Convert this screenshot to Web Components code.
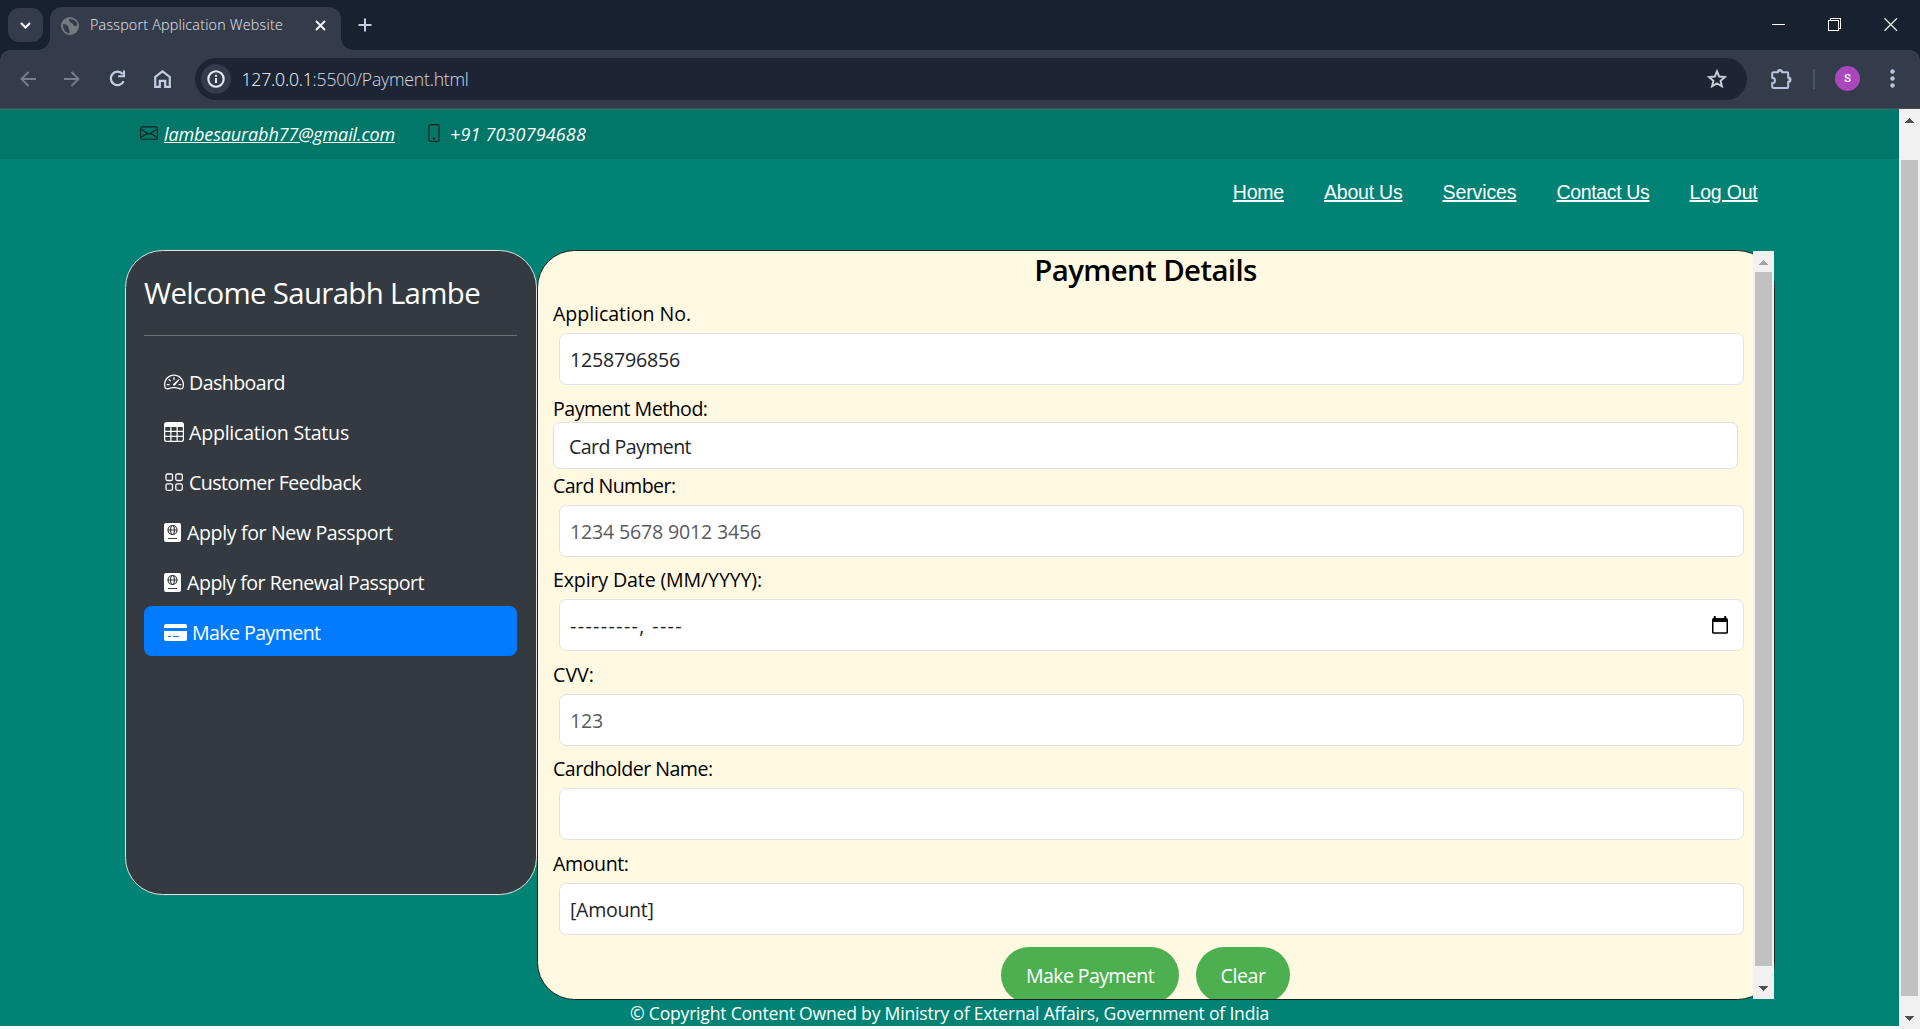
<!DOCTYPE html>
<html lang="en">
<head>
<meta charset="utf-8">
<title>Passport Application Website</title>
<style>
html,body{margin:0;height:100%;overflow:hidden;background:#fff}
body{font-family:"Open Sans","Noto Sans",sans-serif;color:#fff}
</style>
</head>
<body>
<browser-window>
  <tab-strip slot="tabs"></tab-strip>
  <browser-toolbar slot="toolbar"></browser-toolbar>
  <contact-bar></contact-bar>
  <site-nav></site-nav>
  <page-columns>
    <side-menu></side-menu>
    <payment-panel></payment-panel>
  </page-columns>
  <page-footer></page-footer>
  <scroll-bar slot="scroll" start="51" end="33"></scroll-bar>
</browser-window>
<script>
const make = (name, html, setup) => {
  const t = document.createElement('template');
  t.innerHTML = '<style>:host,*{box-sizing:border-box}svg{display:block;flex:none}</style>' + html;
  customElements.define(name, class extends HTMLElement {
    connectedCallback() {
      if (this.shadowRoot) return;
      this.attachShadow({ mode: 'open' }).append(t.content.cloneNode(true));
      if (setup) setup(this, this.shadowRoot);
    }
  });
};

/* A single line of text whose tracking is set so that it fills a given width. */
class FitText extends HTMLElement {
  connectedCallback() {
    if (this.shadowRoot) return;
    const root = this.attachShadow({ mode: 'open' });
    root.innerHTML = '<style>:host{display:inline-block;white-space:nowrap;flex:none}span{display:inline-block;text-decoration:inherit;text-underline-offset:inherit}</style><span><slot></slot></span>';
    requestAnimationFrame(() => this.fit());
    this.fit();
  }
  fit() {
    const s = this.shadowRoot.querySelector('span'), w = +this.getAttribute('w');
    s.style.letterSpacing = '0';
    const n = this.textContent.length, d = (w - s.getBoundingClientRect().width) / n;
    s.style.letterSpacing = d.toFixed(3) + 'px';
  }
}
customElements.define('fit-text', FitText);

make('scroll-bar', `<style>
:host{display:flex;flex-direction:column;width:21px;flex:none;background:#f1f1f1}
.b{flex:none;display:flex;justify-content:center}
.t{flex:1;margin:0 2px;background:#c1c1c1}
</style><div class="b up"><svg width="9" height="5" shape-rendering="crispEdges"><path d="M0 5L4.500 0L9 5Z"/></svg></div><div class="t"></div><div class="b dn"><svg width="9" height="5" shape-rendering="crispEdges"><path d="M0 0L4.500 5L9 0Z"/></svg></div>`,
(h, r) => {
  const up = r.querySelector('.up'), dn = r.querySelector('.dn');
  up.style.height = h.getAttribute('start') + 'px';
  up.style.paddingTop = '9px';
  dn.style.height = h.getAttribute('end') + 'px';
  dn.style.alignItems = 'flex-end';
  dn.style.paddingBottom = '8px';
  up.style.color = h.hasAttribute('top') ? '#a3a3a3' : '#505050';
  up.querySelector('path').setAttribute('fill', 'currentColor');
  dn.querySelector('path').setAttribute('fill', '#505050');
});

make('browser-window', `<style>
:host{display:flex;flex-direction:column;height:100vh;background:#18202f}
.view{flex:1;display:flex;min-height:0;background:#fff}
.page{flex:1;height:917px;background:#008374;overflow:hidden}
::slotted(scroll-bar){height:920px}
</style><slot name="tabs"></slot><slot name="toolbar"></slot><div class="view"><div class="page"><slot></slot></div><slot name="scroll"></slot></div>`);

make('tab-strip', `<style>
:host{display:flex;height:50px;flex:none;background:#18212f;color:#e8ebf2}
.search{width:35px;height:34px;margin:8px 7px 0 8px;border-radius:11px;background:#343b4b;display:flex;align-items:center;justify-content:center}
.tab{position:relative;width:291px;height:43px;margin-top:7px;border-radius:12px 12px 0 0;background:#343b4b;display:flex;align-items:center;padding:0 15px 6px 11px}
.tab:before,.tab:after{content:"";position:absolute;bottom:0;width:12px;height:12px}
.tab:before{left:-12px;background:radial-gradient(circle at 0 0,transparent 11.5px,#343b4b 12px)}
.tab:after{right:-12px;background:radial-gradient(circle at 100% 0,transparent 11.5px,#343b4b 12px)}
fit-text{font-size:14.3px;line-height:20px;margin:-1px 0 0 11px;font-weight:350}
.x{margin-left:auto}
.plus{margin:18px 0 0 17px}
.win{margin:18px 22px 0 auto;display:flex;gap:43px}
</style>
<div class="search"><svg width="11" height="7"><path d="M1 1l4.500 4.500L10 1" fill="none" stroke="#f3f5f9" stroke-width="2.200"/></svg></div>
<div class="tab"><svg width="18" height="18" viewBox="0 0 18 18"><circle cx="9" cy="9" r="9" fill="#757a80"/><path d="M2 7c3 0 5 1 5.500 3.500S9 13 8.500 16.300C4.500 16 1.800 12.500 2 7zM8 2c0 3 1.500 3.800 3 4.200s1.200 2.800 3.200 3.100 1.700-2 2-2.800C15 3.500 11.500 1.600 8 2z" fill="#343b4b"/></svg><fit-text w="193">Passport Application Website</fit-text><svg class="x" width="11" height="11"><path d="M1 1l9 9M10 1l-9 9" stroke="#eef0f5" stroke-width="2"/></svg></div>
<svg class="plus" width="14" height="14"><path d="M7 .5v13M.5 7h13" stroke="#c3cce0" stroke-width="2"/></svg>
<div class="win"><svg width="13" height="13" shape-rendering="crispEdges"><path d="M0 6.500h13" stroke="#fff"/></svg><svg width="13" height="13" shape-rendering="crispEdges"><path d="M.5 2.500h10v10H.5zM2.500 2.500v-2h10v10h-2" fill="none" stroke="#fff"/></svg><svg width="14" height="13"><path d="M.5 .3l12.500 12.500M13 .3L.5 12.800" stroke="#e8eae4" stroke-width="1.300"/></svg></div>`);

make('browser-toolbar', `<style>
:host{display:block;height:59px;flex:none;background:#18212f}
.bar{height:59px;background:#343b4b;border-bottom:1px solid #4c4d52;border-radius:10px 10px 0 0;display:flex;align-items:center;padding:0 25px 1px 20px}
.ic{display:flex;gap:28.400px;align-items:center}
.url{width:1552px;height:42px;margin-left:23.800px;border-radius:21px;background:#1d2535;display:flex;align-items:center;padding:0 20px 0 6px;color:#d5dae4}
.info{width:30px;height:30px;border-radius:50%;background:#343b4b;display:flex;align-items:center;justify-content:center;margin-right:10.500px}
fit-text{font-size:17.600px;line-height:26px;font-weight:350;margin-top:1px}
i{font-style:normal;color:#fff}
.star{margin-left:auto}
.ext{margin-left:23px}
.sep{width:2px;height:20px;background:#4b5467;margin:0 20px 0 21px}
.av{width:25px;height:25px;border-radius:50%;background:#ab47bc;font:500 11.500px/25px Roboto,sans-serif;text-align:center;color:#fff}
.dots{margin-left:auto}
</style><div class="bar"><div class="ic">
<svg width="16" height="16"><path d="M16 8H1.500M8.500 1L1.500 8l7 7" fill="none" stroke="#767d8c" stroke-width="1.900"/></svg>
<svg width="16" height="16"><path d="M0 8h14.500M7.500 1l7 7-7 7" fill="none" stroke="#767d8c" stroke-width="1.900"/></svg>
<svg width="17" height="17"><path d="M14.600 11.200A6.700 6.700 0 1 1 13.600 4" fill="none" stroke="#c3cce0" stroke-width="2.300"/><path d="M16 .5v6.800H9.200V5.200h4.700V.5z" fill="#c3cce0"/></svg>
<svg width="17" height="18"><path d="M1.200 7v9.800h4.600v-6h5.400v6h4.600V7L8.500 1.300z" fill="none" stroke="#c3cce0" stroke-width="2.200"/></svg></div>
<div class="url"><div class="info"><svg width="18" height="18"><circle cx="9" cy="9" r="7.700" fill="none" stroke="#e6e9f0" stroke-width="2.100"/><path d="M9 8v5M9 4.800v2" stroke="#e6e9f0" stroke-width="2"/></svg></div><fit-text w="227">
<i>127.0.0.1</i>:5500/Payment.html</fit-text>
<svg class="star" width="20" height="20" viewBox="0 0 20 20"><path d="M10 2.400l2.200 5.200 5.600.5-4.200 3.700 1.300 5.500L10 14.400l-4.900 2.900 1.300-5.500L2.200 8.100l5.600-.5z" fill="none" stroke="#c9cdd6" stroke-width="2"/></svg></div>
<svg class="ext" width="22" height="22"><path d="M3.500 4.200h4.300a2.200 2.200 0 0 1 4.400 0h5a1 1 0 0 1 1 1v4.300a2.300 2.300 0 0 1 0 4.600v5a1 1 0 0 1-1 1H3.500a1.300 1.300 0 0 1-1.300-1.300v-3.600a2.500 2.500 0 0 0 0-5.500V5.500a1.300 1.300 0 0 1 1.300-1.300z" fill="none" stroke="#b9c5de" stroke-width="2"/><path d="M7.500 3.800a2.300 2.300 0 0 1 4.800 0zM18.500 9.300a2.400 2.400 0 0 1 0 5z" fill="#b9c5de"/></svg>
<div class="sep"></div><div class="av">S</div>
<svg class="dots" width="5" height="19"><circle cx="2.500" cy="2.500" r="2.200" fill="#b9c5de"/><circle cx="2.500" cy="9.500" r="2.200" fill="#b9c5de"/><circle cx="2.500" cy="16.500" r="2.200" fill="#b9c5de"/></svg></div>`);

make('contact-bar', `<style>
:host{display:flex;height:50px;background:#007769;padding-left:140px;font:italic 400 18px/26px "Open Sans",sans-serif}
svg{margin-top:15px;fill:#16201f}
fit-text{margin:11.500px 0 0 6px}
fit-text.m{text-decoration:underline;text-underline-offset:1px}
.ph{margin-left:30px}
fit-text.n{margin-left:7px}
</style><svg width="18" height="18" viewBox="0 0 16 16"><path d="M0 4a2 2 0 0 1 2-2h12a2 2 0 0 1 2 2v8a2 2 0 0 1-2 2H2a2 2 0 0 1-2-2V4Zm2-1a1 1 0 0 0-1 1v.217l7 4.200 7-4.200V4a1 1 0 0 0-1-1H2Zm13 2.383-4.708 2.825L15 11.105V5.383Zm-.034 6.876-5.640-3.471L8 9.583l-1.326-.795-5.640 3.470A1 1 0 0 0 2 13h12a1 1 0 0 0 .966-.741ZM1 11.105l4.708-2.897L1 5.383v5.722Z"/></svg>
<fit-text class="m" w="231">lambesaurabh77@gmail.com</fit-text>
<svg class="ph" width="18" height="18" viewBox="0 0 16 16"><path d="M11 1a1 1 0 0 1 1 1v12a1 1 0 0 1-1 1H5a1 1 0 0 1-1-1V2a1 1 0 0 1 1-1h6zM5 0a2 2 0 0 0-2 2v12a2 2 0 0 0 2 2h6a2 2 0 0 0 2-2V2a2 2 0 0 0-2-2H5z"/><path d="M8 14a1 1 0 1 0 0-2 1 1 0 0 0 0 2z"/></svg>
<fit-text class="n" w="136">+91 7030794688</fit-text>`);

make('site-nav', `<style>
:host{display:flex;height:91px;justify-content:flex-end;gap:40px;padding:21px 141.500px 0 0;font:400 19.500px/24px "Liberation Sans",Arial,sans-serif}
fit-text{text-decoration:underline 1.500px;text-underline-offset:1px;height:24px}
</style><fit-text w="51.200">Home</fit-text><fit-text w="78.500">About Us</fit-text><fit-text w="74">Services</fit-text><fit-text w="93">Contact Us</fit-text><fit-text w="68">Log Out</fit-text>`);

make('page-columns', `<style>:host{display:flex;align-items:flex-start;padding-left:125px}</style><slot></slot>`);

make('menu-item', `<style>
:host{display:flex;height:50px;padding:0 20px;border-radius:7.500px;align-items:flex-start;font-size:19.600px;line-height:30px}
:host([active]){background:#007bff}
slot[name=icon]{display:flex}
.t{margin-top:12px}
::slotted(svg){display:block;flex:none}
</style><slot name="icon"></slot><div class="t"><slot></slot></div>`);

make('side-menu', `<style>
:host{display:flex;flex-direction:column;width:412px;height:645px;flex:none;background:#343a40;border:1px solid #dee2e6;border-radius:37.500px;padding:19px 19px 0 18px}
h2{margin:0;font-weight:370;font-size:29.400px;line-height:47px;height:65px}
hr{margin:0 0 20px;width:100%;border:0;height:1px;background:#6d7175}
svg{display:block;fill:#fff}
</style><h2><fit-text w="336">Welcome Saurabh Lambe</fit-text></h2><hr>
<menu-item><svg slot="icon" style="margin:16px 5px 0 0" width="20" height="20" viewBox="0 0 16 16"><path d="M8 4a.5.5 0 0 1 .5.5V6a.5.5 0 0 1-1 0V4.500A.5.5 0 0 1 8 4zM3.732 5.732a.5.5 0 0 1 .707 0l.915.914a.5.5 0 1 1-.708.708l-.914-.915a.5.5 0 0 1 0-.707zM2 10a.5.5 0 0 1 .5-.5h1.586a.5.5 0 0 1 0 1H2.500A.5.5 0 0 1 2 10zm9.500 0a.5.5 0 0 1 .5-.5h1.500a.5.5 0 0 1 0 1H12a.5.5 0 0 1-.5-.5zm.754-4.246a.389.389 0 0 0-.527-.02L7.547 9.310a.91.91 0 1 0 1.302 1.258l3.434-4.297a.389.389 0 0 0-.029-.518z"/><path fill-rule="evenodd" d="M0 10a8 8 0 1 1 15.547 2.661c-.442 1.253-1.845 1.602-2.932 1.250C11.309 13.488 9.475 13 8 13c-1.474 0-3.310.488-4.615.911-1.087.352-2.490.003-2.932-1.250A7.988 7.988 0 0 1 0 10zm8-7a7 7 0 0 0-6.603 9.329c.203.575.923.876 1.680.630C4.397 12.533 6.358 12 8 12s3.604.532 4.923.960c.757.245 1.477-.056 1.680-.631A7 7 0 0 0 8 3z"/></svg><fit-text w="96">Dashboard</fit-text></menu-item>
<menu-item><svg slot="icon" style="margin:16px 5px 0 0" width="20" height="20" viewBox="0 0 16 16"><path d="M0 2a2 2 0 0 1 2-2h12a2 2 0 0 1 2 2v12a2 2 0 0 1-2 2H2a2 2 0 0 1-2-2V2zm15 2h-4v3h4V4zm0 4h-4v3h4V8zm0 4h-4v3h3a1 1 0 0 0 1-1v-2zm-5 3v-3H6v3h4zm-5 0v-3H1v2a1 1 0 0 0 1 1h3zm-4-4h4V8H1v3zm0-4h4V4H1v3zm5-3v3h4V4H6zm4 4H6v3h4V8z"/></svg><fit-text w="160">Application Status</fit-text></menu-item>
<menu-item><svg slot="icon" style="margin:16px 5px 0 0;fill:none;stroke:#fff;stroke-width:1.300" width="20" height="20"><rect x="2" y="2" width="6.500" height="6.500" rx="1.500"/><rect x="11.800" y="2" width="6.500" height="6.500" rx="1.500"/><rect x="2" y="11.800" width="6.500" height="6.500" rx="1.500"/><rect x="11.800" y="11.800" width="6.500" height="6.500" rx="1.500"/></svg><fit-text w="172">Customer Feedback</fit-text></menu-item>
<menu-item><svg slot="icon" style="margin:17px 6px 0 0" width="17" height="19"><rect width="17" height="19" rx="2"/><g fill="none" stroke="#343a40" stroke-width="1.200"><circle cx="8.500" cy="7" r="4.500"/><ellipse cx="8.500" cy="7" rx="1.900" ry="4.500"/><path d="M4 7h9M4 15.500h9"/></g></svg><fit-text w="205.500">Apply for New Passport</fit-text></menu-item>
<menu-item><svg slot="icon" style="margin:17px 6px 0 0" width="17" height="19"><rect width="17" height="19" rx="2"/><g fill="none" stroke="#343a40" stroke-width="1.200"><circle cx="8.500" cy="7" r="4.500"/><ellipse cx="8.500" cy="7" rx="1.900" ry="4.500"/><path d="M4 7h9M4 15.500h9"/></g></svg><fit-text w="237">Apply for Renewal Passport</fit-text></menu-item>
<menu-item active><svg slot="icon" style="margin:18px 5px 0 0" width="23" height="17"><path d="M2 0h19a2 2 0 0 1 2 2v2H0V2a2 2 0 0 1 2-2zM0 7h23v8a2 2 0 0 1-2 2H2a2 2 0 0 1-2-2z"/><path d="M4 12.500h3M9 12.500h6" stroke="#007bff" stroke-width="1.200"/></svg><fit-text w="128.500">Make Payment</fit-text></menu-item>`);

make('form-field', `<style>
:host{display:flex;flex-direction:column;width:1191px;margin-left:15px;color:#000;font-size:19.600px}
.l{height:35px;line-height:31px}
.f{height:52px;margin-left:6px;border:1px solid #dee2e6;border-radius:7.500px;background:#fff;display:flex;align-items:flex-start;padding:11px 15px 0 10px;line-height:30px;color:#212529}
:host([hint]) .f{color:#595c5f}
:host([select]) .l{height:29px}
:host([select]) .f{height:47px;margin:0 6px 0 0;padding:8.500px 15px 0}
svg{margin:5px 0 0 auto}
:host(:not([date])) svg{display:none}
</style><div class="l"><slot name="label"></slot></div><div class="f"><slot></slot><svg width="16" height="18"><path fill-rule="evenodd" d="M1.800 0h2v2h8.400V0h2v2A1.700 1.700 0 0 1 16 3.700v12.500a1.500 1.500 0 0 1-1.500 1.500h-13A1.500 1.500 0 0 1 0 16.200V3.700A1.700 1.700 0 0 1 1.800 2zM1.500 6v10.200h13V6z"/></svg></div>`);

make('pill-button', `<style>
:host{display:block;height:56px;border-radius:28px;background:#4caf50;color:#fff;text-align:center;font-size:19.600px;line-height:30px;padding-top:14.400px}
</style><slot></slot>`);

make('payment-panel', `<style>
:host{display:flex;width:1238px;height:750px;flex:none;border:1px solid #16211f;border-radius:37.500px;background:#fff9e1}
.form{width:1215px;height:748px;overflow:hidden;display:flex;flex-direction:column;border-radius:36.500px 0 0 36.500px}
h2{margin:0 0 11px;height:36px;font-size:29.400px;font-weight:540;line-height:38px;text-align:center;color:#000}
.b{display:flex;gap:17px;margin:12px 0 0 463px}
.b pill-button:first-child{width:178px}.b pill-button:last-child{width:94px}
</style><div class="form"><h2><fit-text w="222.500">Payment Details</fit-text></h2>
<form-field><fit-text slot="label" w="138">Application No.</fit-text><fit-text w="110">1258796856</fit-text></form-field>
<form-field select style="margin-top:8px"><fit-text slot="label" w="154.500">Payment Method:</fit-text><fit-text w="122">Card Payment</fit-text></form-field>
<form-field hint style="margin-top:1px"><fit-text slot="label" w="122.500">Card Number:</fit-text><fit-text w="191">1234 5678 9012 3456</fit-text></form-field>
<form-field date style="margin-top:7px"><fit-text slot="label" w="209">Expiry Date (MM/YYYY):</fit-text><fit-text w="113">---------, ----</fit-text></form-field>
<form-field hint style="margin-top:8px"><fit-text slot="label" w="41">CVV:</fit-text><fit-text w="33">123</fit-text></form-field>
<form-field style="margin-top:7px"><fit-text slot="label" w="159.500">Cardholder Name:</fit-text></form-field>
<form-field style="margin-top:8px"><fit-text slot="label" w="75.500">Amount:</fit-text><fit-text w="83.500">[Amount]</fit-text></form-field>
<div class="b"><pill-button><fit-text w="128">Make Payment</fit-text></pill-button><pill-button><fit-text w="45">Clear</fit-text></pill-button></div></div>
<scroll-bar start="21" end="33" top></scroll-bar>`);

make('page-footer', `<style>
:host{display:flex;justify-content:center;height:26px;font-size:17.600px;line-height:26px;font-weight:370}
</style><fit-text w="639">© Copyright Content Owned by Ministry of External Affairs, Government of India</fit-text>`);
</script>
</body>
</html>
